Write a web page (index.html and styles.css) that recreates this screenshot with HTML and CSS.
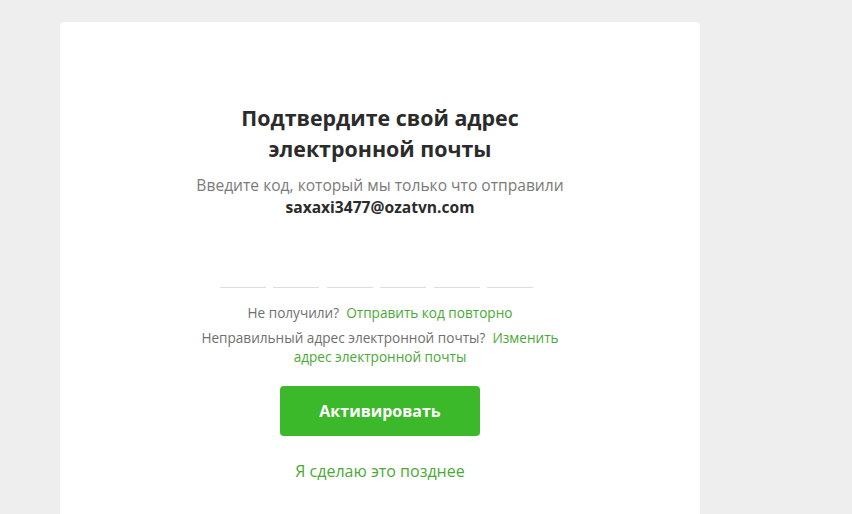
FILE: index.html
```html
<!DOCTYPE html>
<html lang="ru">
<head>
<meta charset="utf-8">
<title>Подтвердите свой адрес электронной почты</title>
<link rel="stylesheet" href="styles.css">
</head>
<body>
<div class="page">
  <main class="card">
    <h1 class="title">Подтвердите свой адрес электронной почты</h1>
    <p class="subtitle">Введите код, который мы только что отправили</p>
    <p class="email">saxaxi3477@ozatvn.com</p>
    <div class="code">
      <input class="digit" maxlength="1" aria-label="1">
      <input class="digit" maxlength="1" aria-label="2">
      <input class="digit" maxlength="1" aria-label="3">
      <input class="digit" maxlength="1" aria-label="4">
      <input class="digit" maxlength="1" aria-label="5">
      <input class="digit" maxlength="1" aria-label="6">
    </div>
    <p class="hint">Не получили?&nbsp; <a class="link" href="#">Отправить код повторно</a></p>
    <p class="hint hint-wide">Неправильный адрес электронной почты?&nbsp; <a class="link" href="#">Изменить</a> <a class="link" href="#">адрес электронной почты</a></p>
    <button class="btn" type="button">Активировать</button>
    <a class="later" href="#">Я сделаю это позднее</a>
  </main>
</div>
</body>
</html>
```
FILE: styles.css
```css
html, body {
  margin: 0;
  padding: 0;
  background: #eeeeee;
  font-family: "Open Sans", "Noto Sans", sans-serif;
}
.page {
  padding: 22px 0 0 60px;
  height: 492px;
  overflow: hidden;
}
.card {
  width: 640px;
  min-height: 492px;
  box-sizing: border-box;
  background: #ffffff;
  border-radius: 4px 4px 0 0;
  padding-top: 80px;
  display: flex;
  flex-direction: column;
  align-items: center;
  text-align: center;
}
.title {
  margin: 0;
  width: 310px;
  font-size: 21.4px;
  line-height: 31px;
  font-weight: 700;
  color: #2b2b2b;
}
.subtitle {
  margin: 10px 0 0;
  font-size: 15.6px;
  line-height: 22px;
  color: #7b7b7b;
}
.email {
  margin: 0;
  font-size: 15.6px;
  line-height: 22px;
  font-weight: 700;
  color: #2b2b2b;
}
.code {
  margin-top: 30px;
  display: flex;
  gap: 7.4px;
  padding-right: 7px;
}
.digit {
  width: 46px;
  height: 40px;
  box-sizing: border-box;
  border: 0;
  border-bottom: 1px solid #dedede;
  outline: none;
  background: transparent;
  text-align: center;
  font: inherit;
  padding: 0;
}
.hint {
  margin: 15px 0 0;
  font-size: 13.6px;
  line-height: 19px;
  color: #6f6f6f;
}
.hint-wide {
  margin-top: 6px;
  width: 370px;
}
.link {
  color: #4aa935;
  text-decoration: none;
}
.btn {
  margin-top: 20px;
  width: 200px;
  height: 50px;
  border: 0;
  border-radius: 4px;
  background: #3cb92a;
  color: #ffffff;
  font-family: inherit;
  font-size: 16px;
  font-weight: 700;
  cursor: pointer;
}
.later {
  margin-top: 24px;
  font-size: 16px;
  line-height: 22px;
  color: #4aa935;
  text-decoration: none;
}
```
